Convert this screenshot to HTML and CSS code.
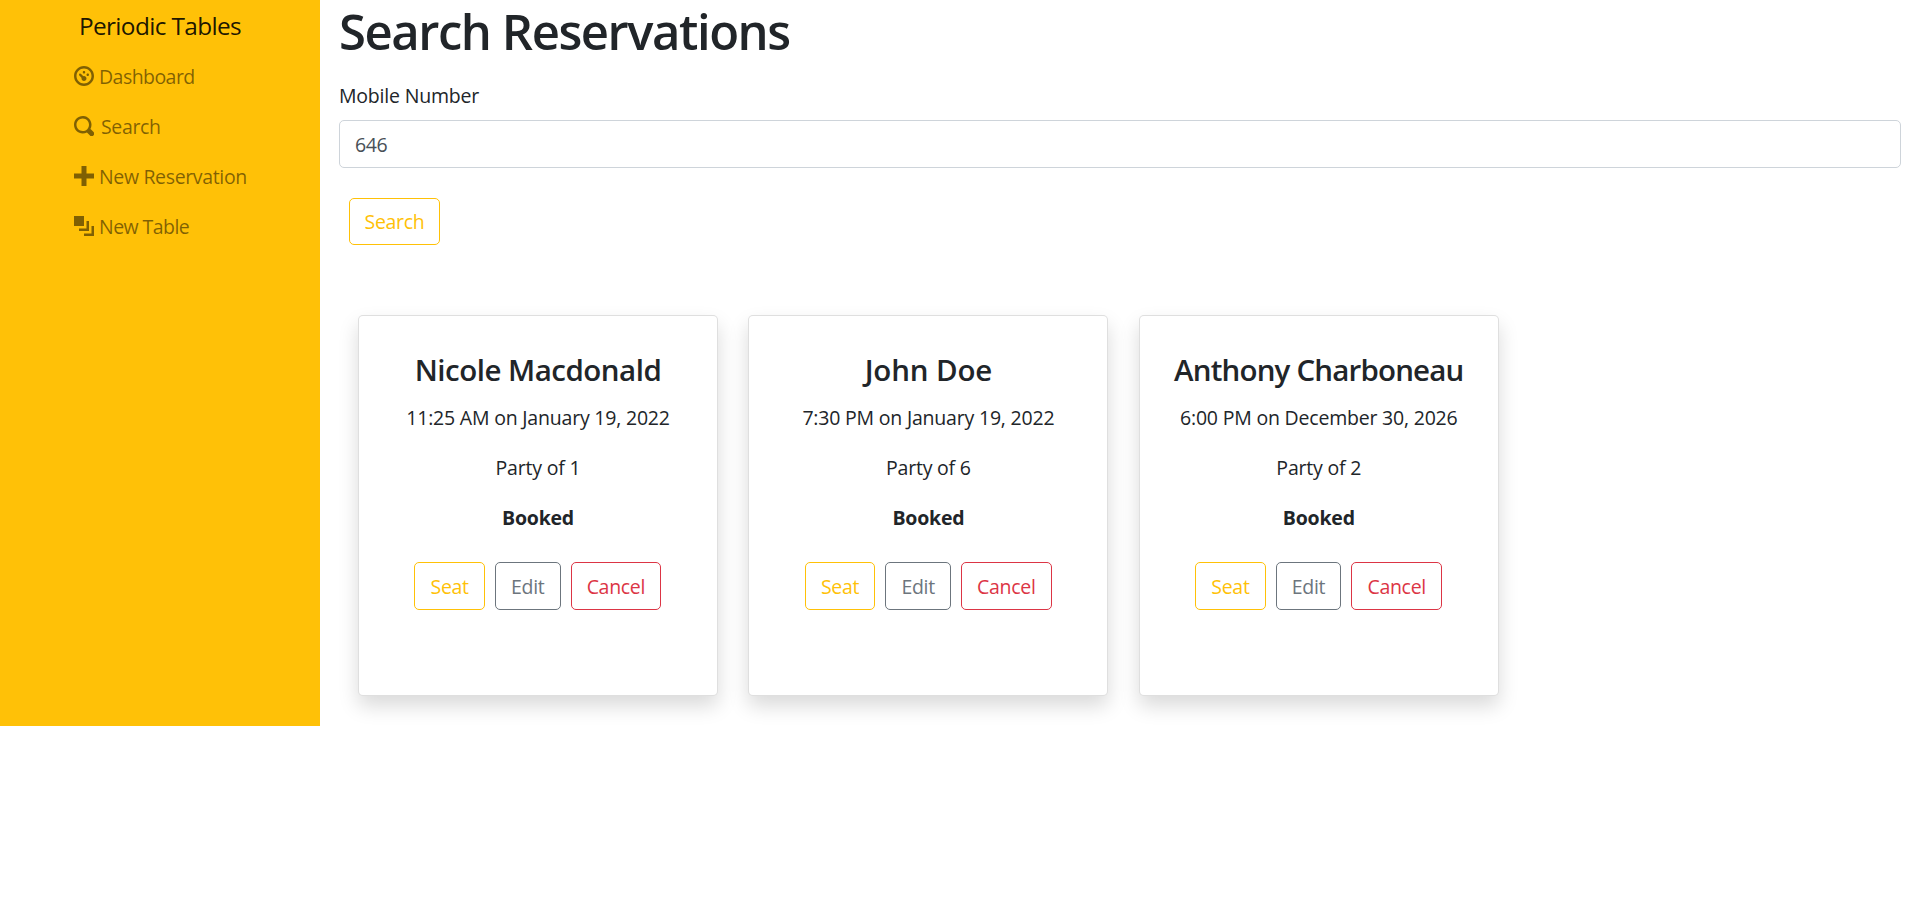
FILE: index.html
```html
<!DOCTYPE html>
<html lang="en">
<head>
<meta charset="utf-8">
<title>Periodic Tables</title>
<link rel="stylesheet" href="styles.css">
</head>
<body>
<div class="layout">
  <nav class="sidebar">
    <a class="brand">Periodic Tables</a>
    <ul class="menu">
      <li class="menu-item tight"><svg class="icon" viewBox="0 0 8 8"><path d="M4 0c-2.2 0-4 1.8-4 4s1.8 4 4 4 4-1.8 4-4-1.8-4-4-4zm0 1c1.66 0 3 1.34 3 3s-1.34 3-3 3-3-1.34-3-3 1.34-3 3-3zm0 1c-.28 0-.5.22-.5.5s.22.5.5.5.5-.22.5-.5-.22-.5-.5-.5zm-1.66 1a.5.5 0 0 0-.19.84l.91.91c-.02.08-.06.16-.06.25 0 .55.45 1 1 1s1-.45 1-1-.45-1-1-1c-.09 0-.17.04-.25.06l-.91-.91a.5.5 0 0 0-.44-.16.5.5 0 0 0-.06 0zm3.16 0c-.28 0-.5.22-.5.5s.22.5.5.5.5-.22.5-.5-.22-.5-.5-.5z"/></svg><span>Dashboard</span></li>
      <li class="menu-item wide"><svg class="icon" viewBox="0 0 8 8"><path d="M3.5 0c-1.93 0-3.5 1.57-3.5 3.5s1.57 3.5 3.5 3.5c.59 0 1.17-.14 1.66-.41a1 1 0 0 0 .13.13l1 1a1.02 1.02 0 1 0 1.44-1.44l-1-1a1 1 0 0 0-.16-.13c.27-.49.44-1.06.44-1.66 0-1.93-1.55-3.5-3.5-3.5zm0 1c1.39 0 2.5 1.11 2.5 2.5 0 .66-.24 1.27-.66 1.72l-.03.03a1 1 0 0 0-.13.13c-.44.4-1.04.63-1.69.63-1.39 0-2.5-1.11-2.5-2.5s1.11-2.5 2.5-2.5z"/></svg><span>Search</span></li>
      <li class="menu-item"><svg class="icon" viewBox="0 0 8 8"><path d="M3 0v3h-3v2h3v3h2v-3h3v-2h-3v-3h-2z"/></svg><span>New Reservation</span></li>
      <li class="menu-item tight"><svg class="icon" viewBox="0 0 8 8"><path d="M0 0v4h4v-4h-4zm5 2v3h-3v1h4v-4h-1zm2 2v3h-3v1h4v-4h-1z"/></svg><span>New Table</span></li>
    </ul>
  </nav>
  <main class="content">
    <h1 class="title">Search Reservations</h1>
    <form class="search-form">
      <label class="label" for="mobile">Mobile Number</label>
      <input class="input" id="mobile" type="text" value="646">
      <button class="btn btn-warning search-btn" type="button">Search</button>
    </form>
    <section class="cards">
      <article class="card">
        <h3 class="name">Nicole Macdonald</h3>
        <p class="line">11:25 AM on January 19, 2022</p>
        <p class="line">Party of 1</p>
        <p class="line status">Booked</p>
        <div class="actions"><button class="btn btn-warning">Seat</button><button class="btn btn-secondary">Edit</button><button class="btn btn-danger">Cancel</button></div>
      </article>
      <article class="card">
        <h3 class="name name-short">John Doe</h3>
        <p class="line">7:30 PM on January 19, 2022</p>
        <p class="line">Party of 6</p>
        <p class="line status">Booked</p>
        <div class="actions"><button class="btn btn-warning">Seat</button><button class="btn btn-secondary">Edit</button><button class="btn btn-danger">Cancel</button></div>
      </article>
      <article class="card">
        <h3 class="name name-long">Anthony Charboneau</h3>
        <p class="line">6:00 PM on December 30, 2026</p>
        <p class="line">Party of 2</p>
        <p class="line status">Booked</p>
        <div class="actions"><button class="btn btn-warning">Seat</button><button class="btn btn-secondary">Edit</button><button class="btn btn-danger">Cancel</button></div>
      </article>
    </section>
  </main>
</div>
</body>
</html>
```
FILE: styles.css
```css
*, *::before, *::after { box-sizing: border-box; }
body {
  margin: 0;
  background: #fff;
  color: #212529;
  font: 400 19.5px/30px "Open Sans", "Noto Sans", sans-serif;
  letter-spacing: -0.2px;
}
.layout { display: flex; align-items: stretch; height: 726px; }
.sidebar {
  width: 320px;
  flex: none;
  padding-top: 7px;
  background: #ffc107;
}
.brand {
  display: block;
  text-align: center;
  font-size: 24.4px;
  line-height: 38px;
  letter-spacing: -0.63px;
  color: rgba(0, 0, 0, 0.9);
}
.menu { list-style: none; margin: 6px 0 0; padding: 0 0 0 73.5px; }
.menu-item {
  display: flex;
  align-items: center;
  gap: 5.5px;
  height: 50px;
  color: rgba(0, 0, 0, 0.5);
  letter-spacing: -0.35px;
}
.menu-item.tight { letter-spacing: -0.55px; }
.menu-item.wide { gap: 7.5px; }
.menu-item span { padding-top: 2px; }
.icon { width: 20px; height: 20px; flex: none; fill: currentColor; }
.content { flex: 1; padding: 0 19px; }
.title {
  margin: 0 0 10px;
  padding-top: 2px;
  font-size: 49px;
  font-weight: 600;
  line-height: 58px;
  letter-spacing: -1.45px;
}
.search-form { display: flex; flex-direction: column; align-items: flex-start; padding-top: 10px; }
.label { display: block; padding-top: 1px; margin-bottom: 9px; }
.input {
  width: 100%;
  height: 48px;
  padding: 1px 15px 0;
  border: 1px solid #ced4da;
  border-radius: 5px;
  background: #fff;
  color: #495057;
  font: inherit;
  letter-spacing: -0.4px;
}
.btn {
  height: 48px;
  padding: 1px 14px 0;
  border: 1px solid currentColor;
  border-radius: 5px;
  background: transparent;
  font: inherit;
  letter-spacing: -0.3px;
}
.btn-warning { color: #ffc107; }
.btn-secondary { color: #6c757d; }
.btn-danger { color: #dc3545; }
.search-btn { width: 91px; height: 47px; margin: 30px 0 0 10px; }
.cards { display: flex; gap: 30.4px; padding: 70px 0 0 19px; }
.card {
  width: 360px;
  height: 381px;
  padding: 36px 24px 0;
  border: 1px solid rgba(0, 0, 0, 0.125);
  border-radius: 5px;
  background: #fff;
  text-align: center;
  box-shadow: 0 10px 20px rgba(0, 0, 0, 0.15);
}
.name {
  margin: 0 0 15px;
  font-size: 29.5px;
  font-weight: 600;
  line-height: 36px;
  letter-spacing: -0.5px;
}
.name-short { letter-spacing: -0.15px; }
.name-long { letter-spacing: -0.82px; }
.line { margin: 0 0 20px; }
.status { font-weight: 700; }
.actions { display: flex; justify-content: center; gap: 10px; padding: 9px 0.4px 0 0; }
.actions .btn-warning { width: 70.5px; }
.actions .btn-secondary { width: 65.7px; }
.actions .btn-danger { width: 90.6px; }
```
